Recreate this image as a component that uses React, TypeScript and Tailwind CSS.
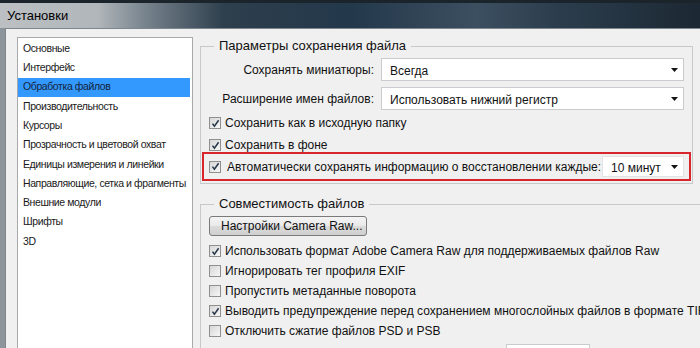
import React from "react";

const font = "font-['Liberation_Sans','DejaVu_Sans',sans-serif]";

const Box = ({ on }: { on?: boolean }) => (
  <span className="w-[12px] h-[12px] shrink-0 border border-[#8f8f8f] bg-gradient-to-br from-[#d6d6d6] to-[#f7f7f7] flex items-center justify-center">
    {on && (
      <svg width="9" height="9" viewBox="0 0 9 9">
        <path d="M1.5 4.6 L3.4 7.2 L7.6 1.2" fill="none" stroke="#27354a" strokeWidth="1.5" />
      </svg>
    )}
  </span>
);

const Arrow = () => (
  <svg width="7" height="4" viewBox="0 0 7 4" className="shrink-0">
    <path d="M0 0h7L3.5 4z" fill="#141414" />
  </svg>
);

const Select = ({ value, className }: { value: string; className: string }) => (
  <div className={`bg-white border border-[#c9cbcf] flex items-center pl-[8px] pr-[5px] ${className}`}>
    <span className="flex-1 pt-[2px]">{value}</span>
    <Arrow />
  </div>
);

const CheckRow = ({ on, label, className = "" }: { on?: boolean; label: string; className?: string }) => (
  <div className={`flex items-center gap-[4px] pl-[8px] whitespace-nowrap ${className}`}>
    <Box on={on} />
    <span>{label}</span>
  </div>
);

const menu = [
  "Основные",
  "Интерфейс",
  "Обработка файлов",
  "Производительность",
  "Курсоры",
  "Прозрачность и цветовой охват",
  "Единицы измерения и линейки",
  "Направляющие, сетка и фрагменты",
  "Внешние модули",
  "Шрифты",
  "3D",
];

export default function App() {
  return (
    <div className={`w-[700px] h-[348px] overflow-hidden bg-[#2a3744] ${font}`}>
      {/* title bar */}
      <div className="h-[28px] border-t-[3px] border-[#1b232b] bg-[linear-gradient(90deg,#bcc0c3_0%,#b0b6ba_14%,#75818b_21%,#2e3f4d_32%,#23384b_50%,#3c4f60_68%,#2b3d4d_80%,#1c2833_100%)] flex items-center pl-[7px]">
        <span className="text-[13px] text-black pt-[1px]">Установки</span>
      </div>

      <div className="flex h-[320px] pl-[5px] bg-[#8d959b]">
        <div className="flex-1 bg-[#f0f0f0] border-l border-t border-[#7f878d] flex pt-[8px] pl-[11px] text-[12px] text-[#111]">
          {/* left list */}
          <div className="w-[176px] h-[320px] shrink-0 bg-white border border-[#a7a9ab] pt-[1px] text-[10.5px] tracking-[-0.4px]">
            {menu.map((m, i) => (
              <div
                key={m}
                className={`h-[19.3px] flex items-center pl-[5px] whitespace-nowrap ${i === 2 ? "bg-[#3399ff] text-[#15233a] mr-[2px]" : "text-[#1a1a1a]"}`}
              >
                {m}
              </div>
            ))}
          </div>

          {/* right panel */}
          <div className="ml-[7px] w-[493px] shrink-0 flex flex-col pt-[1px]">
            <fieldset className="border border-[#c6c9cc] pb-[2px]">
              <legend className="ml-[13px] px-[5px] text-[13px] leading-[16px] text-[#111]">
                Параметры сохранения файла
              </legend>
              <div className="flex items-center mt-[4px] h-[23px]">
                <span className="w-[173px] text-right">Сохранять миниатюры:</span>
                <Select value="Всегда" className="ml-[7px] w-[303px] h-[23px]" />
              </div>
              <div className="flex items-center mt-[6px] h-[23px]">
                <span className="w-[173px] text-right">Расширение имен файлов:</span>
                <Select value="Использовать нижний регистр" className="ml-[7px] w-[303px] h-[23px]" />
              </div>
              <CheckRow on label="Сохранить как в исходную папку" className="mt-[5px] h-[16px]" />
              <CheckRow on label="Сохранить в фоне" className="mt-[6px] h-[16px]" />
              <div className="mx-[1px] mt-[-1px] h-[29px] border-2 border-[#d7262c] flex items-center pl-[5px] pr-[5px] whitespace-nowrap">
                <Box on />
                <span className="ml-[6px] flex-1">
                  Автоматически сохранять информацию о восстановлении каждые:
                </span>
                <Select value="10 минут" className="w-[82px] h-[21px] pl-[5px] border-[#e2e3e5]" />
              </div>
            </fieldset>

            <fieldset className="mt-[12px] border border-[#c6c9cc] flex-1">
              <legend className="ml-[13px] px-[5px] text-[13px] leading-[16px] text-[#111]">
                Совместимость файлов
              </legend>
              <div className="mt-[4px] ml-[8px] w-[158px] h-[20px] rounded-[3px] border border-[#7a7a7a] bg-[linear-gradient(180deg,#f4f4f4_0%,#e9e9e9_48%,#dbdbdb_52%,#cfcfcf_100%)] flex items-center pl-[11px]">
                Настройки Camera Raw...
              </div>
              <CheckRow on label="Использовать формат Adobe Camera Raw для поддерживаемых файлов Raw" className="mt-[5px] h-[20px]" />
              <CheckRow label="Игнорировать тег профиля EXIF" className="h-[20px]" />
              <CheckRow label="Пропустить метаданные поворота" className="h-[20px]" />
              <CheckRow on label="Выводить предупреждение перед сохранением многослойных файлов в формате TIFF" className="h-[20px]" />
              <CheckRow label="Отключить сжатие файлов PSD и PSB" className="h-[20px]" />
              <div className="mt-[3px] ml-[305px] w-[84px] h-[22px] bg-white border border-[#c9cbcf]" />
            </fieldset>
          </div>
        </div>
      </div>
    </div>
  );
}
